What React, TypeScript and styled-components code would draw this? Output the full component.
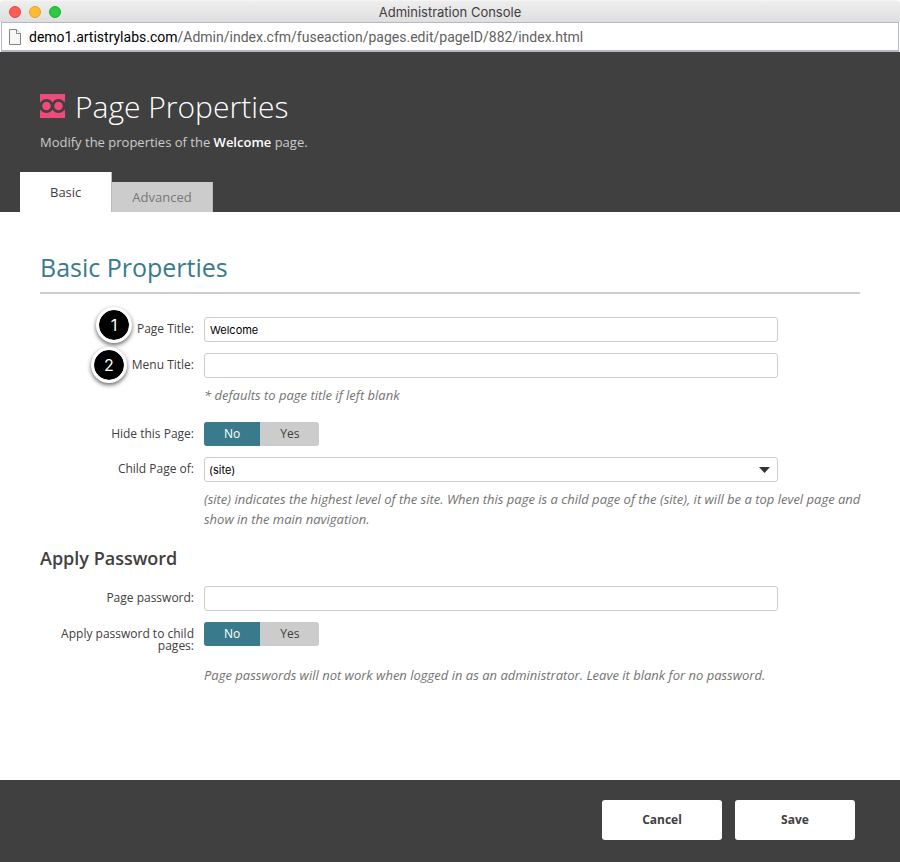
import React from "react";
import styled, { createGlobalStyle } from "styled-components";

const ink = "#404040";
const teal = "#397b8c";
const grey = "#cccccc";

const GlobalStyle = createGlobalStyle`
  *, *::before, *::after { box-sizing: border-box; }
  body {
    margin: 0;
    color: ${ink};
    background: #fff;
    font-family: "Open Sans", sans-serif;
    font-size: 12px;
  }
  h1, h2, h3, p { margin: 0; }
  button, input, select { font: inherit; margin: 0; }
`;

const Window = styled.div`
  display: flex;
  flex-direction: column;
  min-height: 100vh;
`;

const TitleBar = styled.div`
  display: grid;
  grid-template-columns: 1fr auto 1fr;
  align-items: center;
  height: 22px;
  padding: 2px 9px 0;
  background: linear-gradient(#f6f6f6, #ededed 2px, #dfdfdf);
  border-radius: 4px 4px 0 0;
  font: 13px/20px Inter, sans-serif;
`;

const Lights = styled.div`
  display: flex;
  gap: 8px;
`;

const Light = styled.button<{ $fill: string; $edge: string }>`
  width: 12px;
  height: 12px;
  padding: 0;
  border: 1px solid ${(p) => p.$edge};
  border-radius: 50%;
  background: ${(p) => p.$fill};
`;

const AddressBar = styled.div`
  display: flex;
  align-items: center;
  gap: 8px;
  height: 30px;
  margin: 0 1px;
  padding: 0 7px;
  border: 1px solid #b4b8c4;
  border-bottom-width: 2px;
  font: 14px/20px Roboto, sans-serif;
  color: #5f5f5f;

  b { font-weight: 400; color: #000; }
`;

const Header = styled.header`
  background: ${ink};
  padding: 31px 20px 0;
`;

const Brand = styled.div`
  display: flex;
  align-items: center;
  gap: 10px;
  padding: 0 20px;
`;

const PageHeading = styled.h1`
  padding-top: 2px;
  font-size: 30px;
  line-height: 44px;
  font-weight: 300;
  color: #fff;
`;

const Intro = styled.p`
  padding: 3px 20px 0;
  font-size: 13px;
  line-height: 20px;
  font-weight: 500;
  color: ${grey};

  strong { color: #fff; font-weight: 600; }
`;

const Tabs = styled.nav`
  display: flex;
  align-items: flex-end;
  margin-top: 20px;
`;

const Tab = styled.button<{ $active?: boolean }>`
  height: ${(p) => (p.$active ? 40 : 30)}px;
  padding: 0 ${(p) => (p.$active ? 30 : 20)}px;
  border: 0;
  border-right: 1px solid #bbb;
  background: ${(p) => (p.$active ? "#fff" : grey)};
  color: ${(p) => (p.$active ? ink : "#777")};
  font-size: 13px;
  line-height: 20px;
`;

const Content = styled.main`
  flex: 1;
  padding: 35px 40px;
`;

const SectionTitle = styled.h2`
  padding-bottom: 5px;
  border-bottom: 2px solid ${grey};
  font-size: 25px;
  line-height: 40px;
  font-weight: 400;
  color: ${teal};
`;

const SubTitle = styled.h3`
  margin-top: 16px;
  font-size: 18px;
  line-height: 26px;
  font-weight: 600;
`;

const Rows = styled.div<{ $top: number }>`
  display: flex;
  flex-direction: column;
  gap: 11px;
  margin-top: ${(p) => p.$top}px;
`;

const Row = styled.div`
  display: grid;
  grid-template-columns: 154px minmax(0, 1fr);
  column-gap: 10px;
`;

const Caption = styled.div`
  position: relative;
  justify-self: end;
  padding-top: 6px;
  font-size: 12px;
  line-height: 12px;
  text-align: right;
`;

const TextBox = styled.input`
  display: block;
  width: 87.5%;
  height: 25px;
  padding: 0 5px;
  border: 1px solid ${grey};
  border-radius: 3px;
  background: #fff;
  color: #000;
  font: 11px/16px Inter, sans-serif;
`;

const SelectFrame = styled.div`
  display: grid;
  align-items: center;
  width: 87.5%;

  > * { grid-area: 1 / 1; }
  svg { justify-self: end; margin-right: 8px; pointer-events: none; }
`;

const Select = styled.select`
  appearance: none;
  width: 100%;
  height: 25px;
  padding: 0 4px;
  border: 1px solid ${grey};
  border-radius: 3px;
  background: #fff;
  color: #000;
  font: 11px/16px Inter, sans-serif;
`;

const Hint = styled.p<{ $top?: number }>`
  margin-top: ${(p) => p.$top ?? 7}px;
  margin-right: -8px;
  font-size: 13px;
  line-height: 20px;
  font-style: italic;
  color: #737373;
`;

const Toggle = styled.div`
  display: inline-flex;
  height: 24px;
  border-radius: 3px;
  overflow: hidden;
  background: ${grey};
  vertical-align: top;
`;

const Option = styled.label`
  position: relative;
  padding: 0 20px;
  line-height: 24px;
  font-size: 12px;

  input { position: absolute; inset: 0; opacity: 0; }
  &:has(input:checked) { background: ${teal}; color: #fff; font-weight: 500; }
`;

const Badge = styled.span<{ $top: number }>`
  position: absolute;
  right: calc(100% + 5px);
  top: ${(p) => p.$top}px;
  width: 36px;
  height: 36px;
  border: 3px solid #fff;
  border-radius: 50%;
  background: #000;
  background-clip: padding-box;
  box-shadow: 0 2px 4px rgba(0, 0, 0, 0.6);
  color: #fff;
  font: 16px/30px Inter, sans-serif;
  text-align: center;
`;

const Footer = styled.footer`
  display: flex;
  justify-content: flex-end;
  gap: 13px;
  padding: 20px 45px 22px;
  background: ${ink};
`;

const Action = styled.button`
  width: 120px;
  height: 40px;
  padding: 0 0 2px;
  border: 0;
  border-radius: 3px;
  background: #fff;
  color: ${ink};
  font-size: 12px;
  font-weight: 700;
`;

function Logo() {
  return (
    <svg width="25" height="24" viewBox="0 0 25 24" aria-hidden="true">
      <path fill="#ee4a7b" d="M0 0h25v24H0z" />
      <g fill="#ee4a7b" stroke={ink} strokeWidth="2.6">
        <circle cx="6.5" cy="12" r="5.6" />
        <circle cx="18.5" cy="12" r="5.6" />
      </g>
      <path fill={ink} d="M0 7l2 5-2 5zM25 7l-2 5 2 5z" />
    </svg>
  );
}

function PageIcon() {
  return (
    <svg width="12" height="16" viewBox="0 0 12 16" aria-hidden="true">
      <path d="M.5.5h7l4 4v11H.5z" fill="#f7f7f7" stroke="#858585" />
      <path d="M7.500.5v4h4" fill="#fff" stroke="#858585" />
    </svg>
  );
}

function YesNo({ name, label }: { name: string; label: string }) {
  return (
    <Toggle role="radiogroup" aria-labelledby={label}>
      <Option>
        <input type="radio" name={name} value="no" defaultChecked />
        No
      </Option>
      <Option>
        <input type="radio" name={name} value="yes" />
        Yes
      </Option>
    </Toggle>
  );
}

export default function App() {
  return (
    <>
      <GlobalStyle />
      <Window>
        <TitleBar>
          <Lights>
            <Light $fill="#ff5e57" $edge="#e2463f" aria-label="Close" />
            <Light $fill="#ffbc2f" $edge="#e0a030" aria-label="Minimize" />
            <Light $fill="#2aca41" $edge="#1eae31" aria-label="Zoom" />
          </Lights>
          <span>Administration Console</span>
        </TitleBar>
        <AddressBar>
          <PageIcon />
          <span>
            <b>demo1.artistrylabs.com</b>/Admin/index.cfm/fuseaction/pages.edit/pageID/882/index.html
          </span>
        </AddressBar>

        <Header>
          <Brand>
            <Logo />
            <PageHeading>Page Properties</PageHeading>
          </Brand>
          <Intro>
            Modify the properties of the <strong>Welcome</strong> page.
          </Intro>
          <Tabs>
            <Tab $active>Basic</Tab>
            <Tab>Advanced</Tab>
          </Tabs>
        </Header>

        <Content>
          <SectionTitle>Basic Properties</SectionTitle>
          <Rows $top={23}>
            <Row>
              <Caption>
                <Badge $top={-10}>1</Badge>
                <label htmlFor="page-title">Page Title:</label>
              </Caption>
              <TextBox id="page-title" defaultValue="Welcome" />
            </Row>
            <Row>
              <Caption>
                <Badge $top={-6}>2</Badge>
                <label htmlFor="menu-title">Menu Title:</label>
              </Caption>
              <div>
                <TextBox id="menu-title" />
                <Hint>* defaults to page title if left blank</Hint>
              </div>
            </Row>
          </Rows>
          <Rows $top={17}>
            <Row>
              <Caption id="hide-label">Hide this Page:</Caption>
              <div>
                <YesNo name="hide" label="hide-label" />
              </div>
            </Row>
            <Row>
              <Caption>
                <label htmlFor="parent">Child Page of:</label>
              </Caption>
              <div>
                <SelectFrame>
                  <Select id="parent">
                    <option>(site)</option>
                  </Select>
                  <svg width="11" height="6" viewBox="0 0 11 6" aria-hidden="true">
                    <path d="M0 0h11L5.500 6z" fill="#333" />
                  </svg>
                </SelectFrame>
                <Hint>
                  (site) indicates the highest level of the site. When this page is a child page of the
                  (site), it will be a top level page and show in the main navigation.
                </Hint>
              </div>
            </Row>
          </Rows>

          <SubTitle>Apply Password</SubTitle>
          <Rows $top={15}>
            <Row>
              <Caption>
                <label htmlFor="password">Page password:</label>
              </Caption>
              <TextBox id="password" type="password" />
            </Row>
            <Row>
              <Caption id="children-label">Apply password to child pages:</Caption>
              <div>
                <YesNo name="children" label="children-label" />
                <Hint $top={19}>
                  Page passwords will not work when logged in as an administrator. Leave it blank for no
                  password.
                </Hint>
              </div>
            </Row>
          </Rows>
        </Content>

        <Footer>
          <Action>Cancel</Action>
          <Action>Save</Action>
        </Footer>
      </Window>
    </>
  );
}
